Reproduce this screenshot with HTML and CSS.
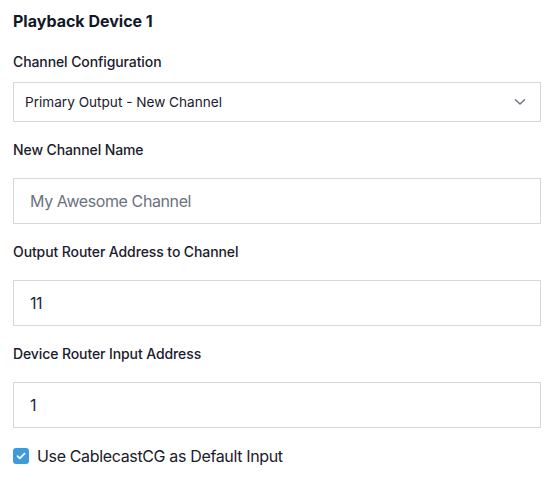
FILE: index.html
```html
<!DOCTYPE html>
<html lang="en">
<head>
<meta charset="utf-8">
<title>Playback Device 1</title>
<link rel="stylesheet" href="styles.css">
</head>
<body>
<form class="device-form">
  <h2 class="title">Playback Device 1</h2>

  <div class="field field-select">
    <label class="label" for="cfg">Channel Configuration</label>
    <div class="select">
      <span class="select-value">Primary Output - New Channel</span>
      <svg class="chevron" width="12" height="8" viewBox="0 0 12 8" aria-hidden="true">
        <path d="M1.5 1.8 L6 6 L10.5 1.8" fill="none" stroke="#6b7280" stroke-width="1.4" stroke-linecap="round" stroke-linejoin="round"/>
      </svg>
    </div>
  </div>

  <div class="field">
    <label class="label">New Channel Name</label>
    <div class="input placeholder">My Awesome Channel</div>
  </div>

  <div class="field">
    <label class="label">Output Router Address to Channel</label>
    <div class="input">11</div>
  </div>

  <div class="field">
    <label class="label">Device Router Input Address</label>
    <div class="input">1</div>
  </div>

  <label class="check">
    <span class="box">
      <svg width="10" height="8" viewBox="0 0 10 8" aria-hidden="true">
        <path d="M1.5 4.2 L3.8 6.3 L8.5 1.6" fill="none" stroke="#fff" stroke-width="1.8" stroke-linecap="round" stroke-linejoin="round"/>
      </svg>
    </span>
    <span class="check-text">Use CablecastCG as Default Input</span>
  </label>
  <span class="ghost"></span>
</form>
</body>
</html>
```

FILE: styles.css
```css
html, body {
  margin: 0;
  padding: 0;
  background: #ffffff;
}

body {
  font-family: Inter, "Noto Sans", "Liberation Sans", sans-serif;
  color: #1a202c;
}

.device-form {
  position: relative;
  display: flex;
  flex-direction: column;
  padding: 11px 12px 0 13px;
}

.title {
  margin: 0 0 21px;
  font-size: 16px;
  line-height: 20px;
  font-weight: 700;
  color: #111827;
}

.field {
  display: flex;
  flex-direction: column;
  margin-bottom: 18px;
}

.label {
  font-size: 14px;
  line-height: 20px;
  font-weight: 500;
  letter-spacing: -0.1px;
  color: #1a202c;
  margin-bottom: 18px;
}

.field-select .label {
  margin-bottom: 10px;
}

.select {
  box-sizing: border-box;
  height: 40px;
  border: 1px solid #d5d7dd;
  display: flex;
  align-items: center;
  justify-content: space-between;
  padding: 0 14px 0 11px;
  font-size: 13.6px;
  color: #1a202c;
}

.chevron {
  display: block;
}

.input {
  box-sizing: border-box;
  height: 46px;
  border: 1px solid #d5d7dd;
  display: flex;
  align-items: center;
  padding: 0 16px;
  font-size: 16px;
  letter-spacing: -0.4px;
  color: #1f2937;
}

.input.placeholder {
  color: #6b7280;
}

.check {
  display: flex;
  align-items: center;
  gap: 8px;
  font-size: 16px;
  line-height: 20px;
  letter-spacing: -0.35px;
  color: #1a202c;
}

.box {
  width: 16px;
  height: 16px;
  border-radius: 3px;
  background: #3f9bd9;
  display: flex;
  align-items: center;
  justify-content: center;
}

.box svg {
  display: block;
}

.ghost {
  position: absolute;
  left: 6px;
  top: 464px;
  width: 28px;
  height: 28px;
  border-radius: 50%;
  background: #fafafa;
}
```
